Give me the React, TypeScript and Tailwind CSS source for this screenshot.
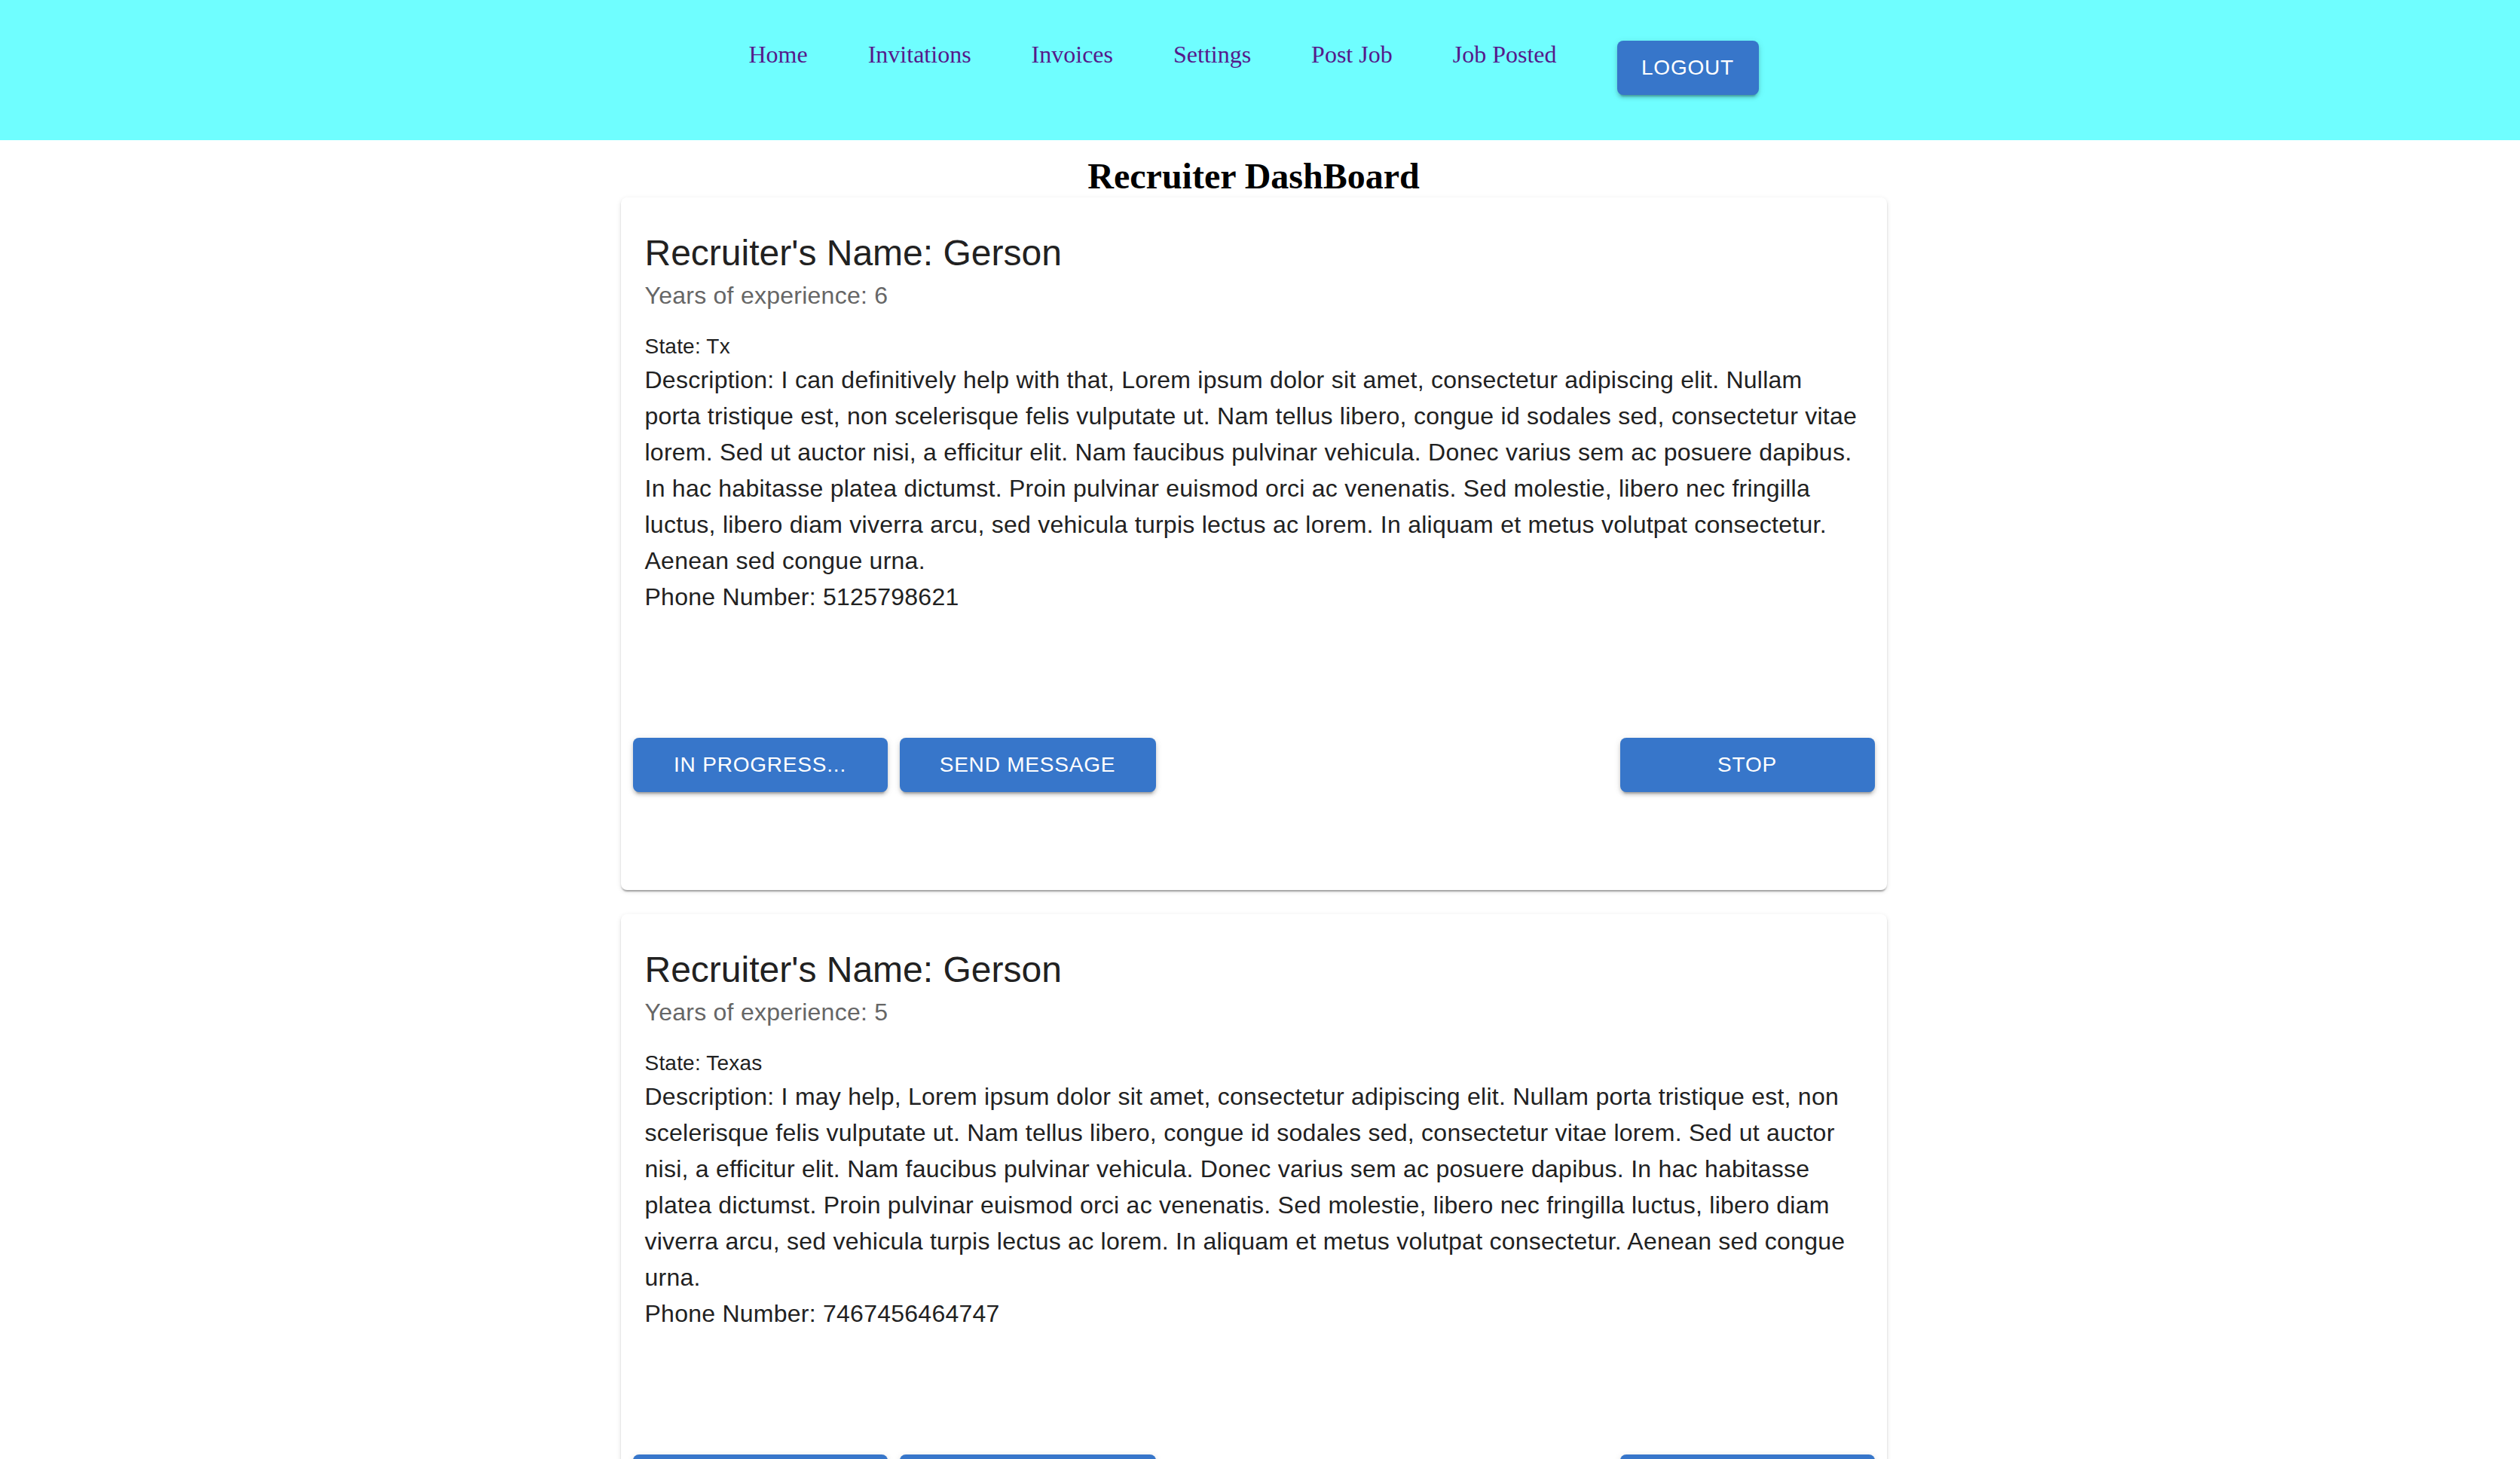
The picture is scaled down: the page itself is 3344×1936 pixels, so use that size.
import React from 'react';

const navLinks = ['Home', 'Invitations', 'Invoices', 'Settings', 'Post Job', 'Job Posted'];

// description broken into the same lines as the original layout
const recruiters = [
  {
    id: 1,
    name: 'Gerson',
    years: 6,
    state: 'Tx',
    description: [
      'Description: I can definitively help with that, Lorem ipsum dolor sit amet, consectetur adipiscing elit. Nullam',
      'porta tristique est, non scelerisque felis vulputate ut. Nam tellus libero, congue id sodales sed, consectetur vitae',
      'lorem. Sed ut auctor nisi, a efficitur elit. Nam faucibus pulvinar vehicula. Donec varius sem ac posuere dapibus.',
      'In hac habitasse platea dictumst. Proin pulvinar euismod orci ac venenatis. Sed molestie, libero nec fringilla',
      'luctus, libero diam viverra arcu, sed vehicula turpis lectus ac lorem. In aliquam et metus volutpat consectetur.',
      'Aenean sed congue urna.',
    ],
    phone: '5125798621',
  },
  {
    id: 2,
    name: 'Gerson',
    years: 5,
    state: 'Texas',
    description: [
      'Description: I may help, Lorem ipsum dolor sit amet, consectetur adipiscing elit. Nullam porta tristique est, non',
      'scelerisque felis vulputate ut. Nam tellus libero, congue id sodales sed, consectetur vitae lorem. Sed ut auctor',
      'nisi, a efficitur elit. Nam faucibus pulvinar vehicula. Donec varius sem ac posuere dapibus. In hac habitasse',
      'platea dictumst. Proin pulvinar euismod orci ac venenatis. Sed molestie, libero nec fringilla luctus, libero diam',
      'viverra arcu, sed vehicula turpis lectus ac lorem. In aliquam et metus volutpat consectetur. Aenean sed congue',
      'urna.',
    ],
    phone: '7467456464747',
  },
];

const btn =
  "h-[72px] rounded-[8px] bg-[#3776ca] text-white text-[28px] uppercase tracking-[0.8px] font-['Liberation_Sans',Arial,sans-serif] shadow-[0_6px_2px_-4px_rgba(0,0,0,0.2),0_4px_4px_0_rgba(0,0,0,0.14),0_2px_10px_0_rgba(0,0,0,0.12)] flex items-center justify-center";

export default function App() {
  return (
    <div className="min-h-screen bg-white">
      {/* header */}
      <header className="h-[186px] bg-[#6ffeff]">
        <nav className="pr-[17px] pt-[54px] flex items-start justify-center gap-[80px]">
          {navLinks.map((link) => (
            <a
              key={link}
              href="#"
              className="text-[32px] leading-[36px] text-[#551a8b] font-['Liberation_Serif','Times_New_Roman',serif]"
            >
              {link}
            </a>
          ))}
          <button className={`${btn} w-[188px]`}>Logout</button>
        </nav>
      </header>

      <main className="pr-[17px] pb-[40px]">
        <h2 className="mt-[20px] text-center text-[48px] leading-[55px] font-bold text-black font-['Liberation_Serif','Times_New_Roman',serif]">
          Recruiter DashBoard
        </h2>

        <div className="flex flex-col items-center gap-[32px] mt-[1px]">
          {recruiters.map((r) => (
            <div
              key={r.id}
              className="w-[1680px] rounded-[8px] bg-white shadow-[0_4px_2px_-2px_rgba(0,0,0,0.2),0_2px_2px_0_rgba(0,0,0,0.14),0_2px_6px_0_rgba(0,0,0,0.12)] font-['Liberation_Sans',Arial,sans-serif]"
            >
              <div className="pt-[42px] pl-[32px] pr-[30px]">
                <h5 className="text-[48px] leading-[64px] text-[#212121]">
                  Recruiter's Name: {r.name}
                </h5>
                <p className="text-[32px] leading-[48px] tracking-[0.25px] text-[#666666] mb-[24px]">
                  Years of experience: {r.years}
                </p>
                <p className="text-[28px] leading-[40px] tracking-[0.2px] text-[#212121]">
                  State: {r.state}
                </p>
                <p className="text-[32px] leading-[48px] tracking-[0.25px] text-[#212121]">
                  {r.description.map((line, i) => (
                    <span key={i} className="block whitespace-nowrap">
                      {line}
                    </span>
                  ))}
                </p>
                <p className="text-[32px] leading-[48px] tracking-[0.25px] text-[#212121]">
                  Phone Number: {r.phone}
                </p>
              </div>

              <div className="flex items-center gap-[16px] px-[16px] pt-[163px] pb-[130px]">
                <button className={`${btn} w-[338px]`}>In Progress...</button>
                <button className={`${btn} w-[340px]`}>Send Message</button>
                <div className="flex-1" />
                <button className={`${btn} w-[338px]`}>Stop</button>
              </div>
            </div>
          ))}
        </div>
      </main>
    </div>
  );
}
